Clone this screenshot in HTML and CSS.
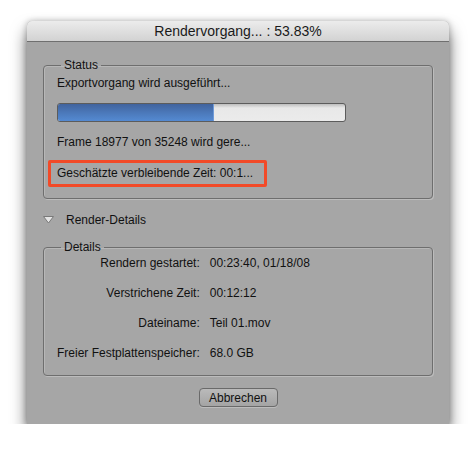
FILE: index.html
```html
<!DOCTYPE html>
<html lang="de">
  <head>
    <meta charset="UTF-8" />
    <meta name="viewport" content="width=device-width, initial-scale=1.0" />
    <title>Rendervorgang</title>
    <link rel="stylesheet" href="styles.css">
  </head>
  <body>
    <div class="window">
      <div class="titlebar">Rendervorgang... : 53.83%</div>

      <div class="content">
        <fieldset class="group status">
          <legend>Status</legend>
          <div class="line">Exportvorgang wird ausgeführt...</div>
          <div class="progress">
            <div class="progress-fill" style="width: 54%"></div>
          </div>
          <div class="line frame-line">Frame 18977 von 35248 wird gere...</div>
          <div class="highlight">Geschätzte verbleibende Zeit: 00:1...</div>
        </fieldset>

        <div class="disclosure">
          <svg class="disclosure-icon" width="11" height="8" viewBox="0 0 11 8">
            <polygon points="0.5,0.5 10.5,0.5 5.5,7" fill="#e4e4e4" stroke="#7a7a7a" stroke-width="1" />
          </svg>
          <span>Render-Details</span>
        </div>

        <fieldset class="group details">
          <legend>Details</legend>
          <div class="details-grid">
            <span class="label">Rendern gestartet:</span>
            <span class="value">00:23:40, 01/18/08</span>
            <span class="label">Verstrichene Zeit:</span>
            <span class="value">00:12:12</span>
            <span class="label">Dateiname:</span>
            <span class="value">Teil 01.mov</span>
            <span class="label">Freier Festplattenspeicher:</span>
            <span class="value">68.0 GB</span>
          </div>
        </fieldset>

        <div class="actions">
          <button class="cancel-button">Abbrechen</button>
        </div>
      </div>
    </div>
  </body>
</html>
```

FILE: styles.css
```css
body {
  margin: 0;
  background-color: #fff;
  font-family: "Liberation Sans", Arial, sans-serif;
  font-size: 12px;
  line-height: 14px;
  color: #111;
}

.window {
  width: 422px;
  margin: 21px 0 0 27px;
  background-color: #a6a6a6;
  border-radius: 5px 5px 0 0;
  box-shadow: 0 10px 16px rgba(0, 0, 0, 0.6), 0 0 6px rgba(0, 0, 0, 0.25);
}

.titlebar {
  height: 20px;
  line-height: 21px;
  text-align: center;
  font-size: 14px;
  color: #1a1a1a;
  background: linear-gradient(#ececec, #d2d2d2);
  border-bottom: 1px solid #6f6f6f;
  border-radius: 5px 5px 0 0;
}

.content {
  padding: 16px 16px 17px;
}

.group {
  margin: 0;
  padding: 4px 13px 11px;
  border: 1px solid #6e6e6e;
  border-radius: 4px;
  box-shadow: 1px 1px 0 rgba(255, 255, 255, 0.25), inset 1px 1px 0 rgba(255, 255, 255, 0.2);
}

.group legend {
  margin-left: 4px;
  padding: 0 3px;
  font-size: 12px;
  line-height: 14px;
}

.progress {
  margin-top: 13px;
  width: 287px;
  height: 17px;
  border: 1px solid #5c5c5c;
  border-radius: 3px;
  background: linear-gradient(#bdbdbd, #e8e8e8 4px, #ebebeb);
  overflow: hidden;
}

.progress-fill {
  height: 100%;
  background: linear-gradient(#41639d, #4b78b9 50%, #548ad2);
  border-right: 1px solid #6f9ad8;
}

.frame-line {
  margin-top: 13px;
}

.highlight {
  box-sizing: border-box;
  width: 219px;
  margin: 11px 0 0 -9px;
  padding: 3px 6px 4px;
  border: 3px solid #f24a28;
  border-radius: 2px;
  white-space: nowrap;
  overflow: hidden;
}

.disclosure {
  display: flex;
  align-items: center;
  margin-top: 14px;
}

.disclosure-icon {
  margin-right: 12px;
}

.details {
  margin-top: 13px;
  padding: 2px 13px 15px;
}

.details-grid {
  display: grid;
  grid-template-columns: max-content auto;
  column-gap: 10px;
  row-gap: 16px;
}

.details-grid .label {
  text-align: right;
  white-space: nowrap;
}

.actions {
  display: flex;
  justify-content: center;
  margin-top: 12px;
}

.cancel-button {
  width: 79px;
  height: 19px;
  padding: 0;
  font-family: "Liberation Sans", Arial, sans-serif;
  font-size: 12px;
  color: #111;
  background: linear-gradient(#bababa, #a4a4a4);
  border: 1px solid #6a6a6a;
  border-radius: 4px;
  box-shadow: 0 1px 0 rgba(255, 255, 255, 0.25);
}
```
